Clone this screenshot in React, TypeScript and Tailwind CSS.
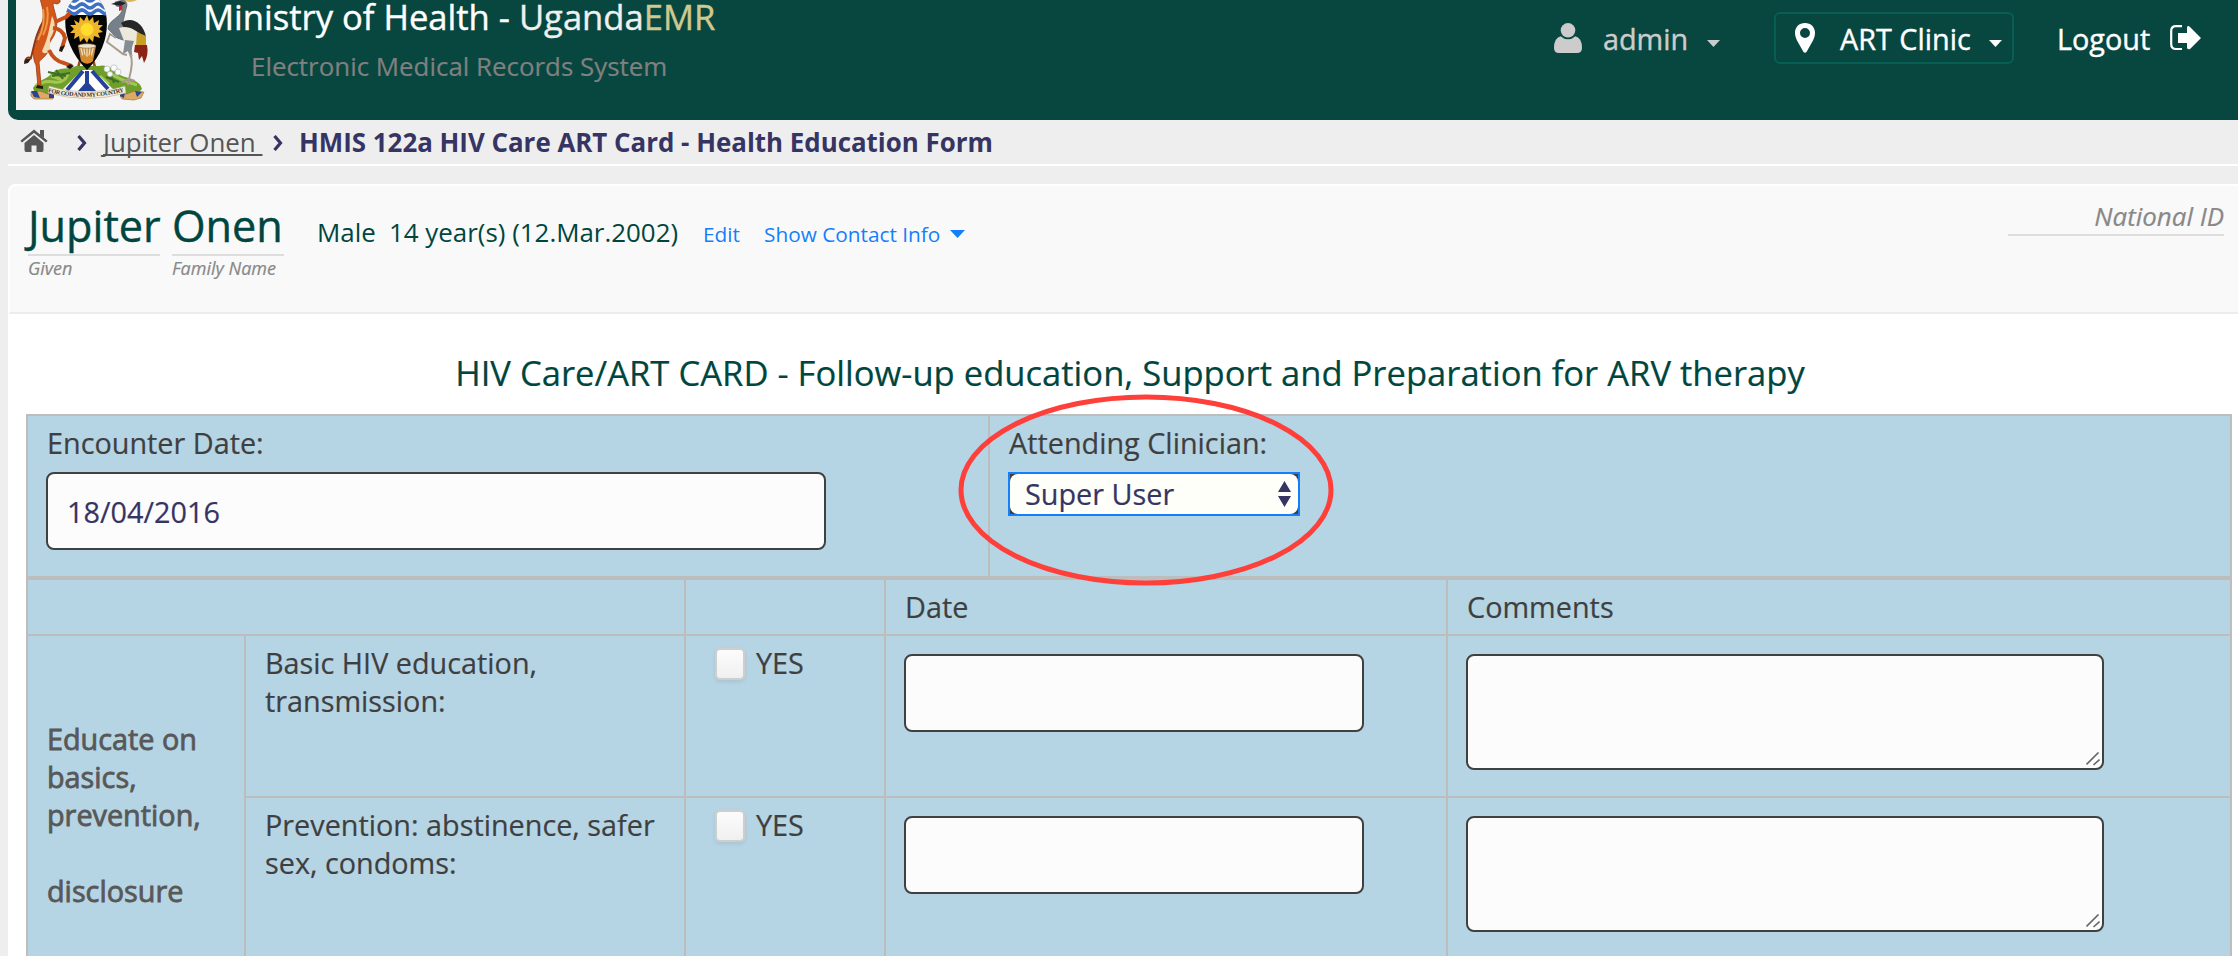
import React from "react";

function CoatOfArms() {
  return (
    <svg viewBox="0 0 144 110" className="block h-[110px] w-[144px] bg-[#f4f4f4]">
      <defs>
        <clipPath id="shield">
          <path d="M50 14C52 4 58 -4 70 -6C82 -4 88 4 90 14C93 30 89 52 71 70C53 52 47 30 50 14Z" />
        </clipPath>
        <path id="motto" d="M32 92Q71 102 111 91" />
      </defs>
      {/* spears */}
      <path d="M60 -2L82 78M82 -2L59 78" stroke="#9c4a1f" strokeWidth="2.6" />
      {/* mound */}
      <path d="M17 88C22 79 31 80 36 73C45 66 54 70 60 66H83C89 64 98 68 104 75C113 79 124 80 126 89L118 97L96 89L71 93L46 91L20 97Z" fill="#6f9f2b" />
      <path d="M20 86Q28 80 38 82T52 74M92 72Q104 80 121 85M35 76L47 80M84 76L93 84" stroke="#a3c750" strokeWidth="3" fill="none" />
      <path d="M32 72L50 76M36 76L54 73M40 70L47 79M90 77L103 82M94 73L98 83" stroke="#3f6f22" strokeWidth="2" fill="none" />
      {/* river */}
      <path d="M66 70H77L98 90Q71 97 46 90Z" fill="#fff" />
      <path d="M67 71L51 90M71 71L71 83M76 71L92 89" stroke="#25429a" strokeWidth="4" fill="none" />
      <path d="M71 81L62 91H80Z" fill="#25429a" />
      {/* shield */}
      <g clipPath="url(#shield)">
        <rect x="45" y="-8" width="52" height="82" fill="#050505" />
        <rect x="45" y="-8" width="52" height="23" fill="#fff" />
        <path d="M46 -1q4 -4 8 0t8 0t8 0t8 0t8 0t8 0M46 6q4 -4 8 0t8 0t8 0t8 0t8 0t8 0M46 12q4 -4 8 0t8 0t8 0t8 0t8 0t8 0" stroke="#3f70c4" strokeWidth="3.6" fill="none" />
      </g>
      <path d="M71 15L73 21L77 17L78 23L83 20L82 25L87 25L83 29L87 32L82 33L84 38L78 36L77 42L73 38L71 43L68 38L64 42L63 36L58 39L59 33L54 33L58 29L54 25L60 25L58 20L63 23L64 17L68 21Z" fill="#efb52d" />
      <circle cx="71" cy="29.5" r="6.5" fill="#ffdc2e" />
      <path d="M62 46L65 61Q71 66 77 61L80 46Z" fill="#c08c4c" />
      <path d="M65 48L67 57M68 48L69 57M71 48V57M74 48L73 57M77 48L75 57" stroke="#f1dbad" strokeWidth="1.4" />
      <path d="M65 57L68 54L71 57L75 54L77 61Q71 66 66 61Z" fill="#d98a2b" />
      <ellipse cx="71" cy="46" rx="9" ry="2.2" fill="#eee4cb" stroke="#93703c" strokeWidth=".6" />
      {/* kob antelope */}
      <path d="M29 18C20 33 19 42 15 58Q10 56 9 62" fill="none" stroke="#8f3412" strokeWidth="2" />
      <path d="M8 64Q8 58 15 59L12 63Z" fill="#262018" />
      <path d="M24 -2L42 -2C45 0 45 3 41 4L37 3C37 10 43 19 40 29C39 37 34 40 33 45C34 54 26 58 23 62L25 84L22 87L20 65C17 60 16 49 20 43C22 34 26 28 27 18C28 10 25 4 24 -2Z" fill="#d3571a" stroke="#8a3210" strokeWidth=".7" />
      <path d="M36 16C41 25 38 32 34 39L34 51C30 54 27 54 26 51C32 39 33 29 36 16Z" fill="#f3d8b0" />
      <path d="M27 9C29 19 27 30 22 40M31 7C33 16 31 28 27 35" stroke="#f19a44" strokeWidth="2" fill="none" />
      <path d="M39 22L50 17L54 13M37 28Q47 29 49 38L46 48M33 50Q38 61 48 63L56 66" fill="none" stroke="#c94f18" strokeWidth="4" strokeLinejoin="round" />
      <path d="M44 47L49 45L46 52L43 51ZM54 64L58 66L54 69L50 67ZM21 85L27 86L27 89L20 88Z" fill="#201b18" />
      {/* crested crane */}
      <path d="M108 -1Q114 2 120 -1" stroke="#d7b95a" strokeWidth="3" fill="none" />
      <path d="M99 2L107 0Q113 2 110 9L107 22L116 25L110 41L101 38L92 29C92 19 108 17 106 7L100 6Z" fill="#76808a" stroke="#4d565d" strokeWidth=".6" />
      <path d="M95 4L104 1L110 3L105 6Z" fill="#20252b" />
      <path d="M103 6Q108 5 106 10L103 11Z" fill="#d3202c" />
      <path d="M105 23C115 16 127 22 130 37L120 35L108 28Z" fill="#262626" />
      <path d="M103 28C112 25 120 30 126 36L119 47L108 41Z" fill="#ece8dc" />
      <path d="M121 32L130 36L130 46L120 46Z" fill="#c9a024" />
      <path d="M119 45L131 45Q133 55 128 63L126 56L123 60L122 53L118 52Z" fill="#8c2416" />
      <path d="M100 38L94 34L91 42L107 54L111 55M111 41Q111 48 114 54Q118 61 113 79M113 79L106 82M113 79L119 81M113 79L112 85" fill="none" stroke="#a99b8c" strokeWidth="2" />
      <path d="M118 41Q114 51 117 57L112 51L107 54L109 40Z" fill="#858d93" />
      <g fill="#fafafa" stroke="#b7bcbc" strokeWidth=".7">
        <circle cx="91" cy="69" r="3" />
        <circle cx="98" cy="68" r="3.2" />
        <circle cx="102" cy="72" r="3" />
        <circle cx="94" cy="74" r="2.6" />
      </g>
      {/* ribbon */}
      <path d="M15 92L24 91L37 96L37 99H18L15 96ZM104 96L119 91L128 92L125 98L118 100L106 99Z" fill="#dda965" stroke="#8d6a3d" strokeWidth=".6" />
      <path d="M15 91L21 91L24 98L18 97ZM104 92L109 92L108 98L104 96ZM33 93H38V98H33ZM119 91L126 92L121 97Z" fill="#2b448f" />
      <path d="M33 86Q71 98 109 86L110 93Q71 104 32 93Z" fill="#f6ecd6" stroke="#b0a080" strokeWidth=".5" />
      <text fontFamily="Liberation Serif, serif" fontWeight="700" fontSize="6.1" fill="#333">
        <textPath href="#motto" textLength="77">FOR GOD AND MY COUNTRY</textPath>
      </text>
    </svg>
  );
}

function Caret({ className }: { className: string }) {
  return (
    <svg viewBox="0 0 14 8" preserveAspectRatio="none" className={className}>
      <path d="M0 0H14L7 8Z" fill="currentColor" />
    </svg>
  );
}

function Chevron() {
  return (
    <svg viewBox="0 0 10 16" className="h-4 w-2.5 text-[#363463]">
      <path d="M1.5 1L7.5 8L1.5 15" fill="none" stroke="currentColor" strokeWidth="3.2" />
    </svg>
  );
}

function Header() {
  return (
    <header className="ml-2 flex h-[120px] rounded-bl-[10px] bg-[#07473f] pl-2">
      <CoatOfArms />
      <div className="ml-[43px] grow whitespace-nowrap">
        <div className="h-[34px] text-[34.6px] leading-[34px] text-white [-webkit-text-stroke:0.4px]">
          Ministry of Health - <span className="text-[#f0f0f0]">Uganda</span>
          <span className="text-[#d0c88f]">EMR</span>
        </div>
        <div className="ml-[48px] mt-[14px] text-[25.9px] leading-[36px] text-[#808080] [-webkit-text-stroke:0.2px]">
          Electronic Medical Records System
        </div>
      </div>
      <nav className="mt-3 flex h-[52px] items-center whitespace-nowrap text-[28.8px] text-white [-webkit-text-stroke:0.4px]">
        <div className="flex items-center text-[#cccccc]">
          <svg viewBox="0 0 28 30" className="h-[30px] w-7" fill="currentColor" strokeWidth="0">
            <circle cx="14" cy="7.3" r="7.3" />
            <path d="M6.5 13.2Q14 19.5 21.5 13.2Q28 15 28 25Q28 30 23 30H5Q0 30 0 25Q0 15 6.5 13.2Z" />
          </svg>
          <span className="ml-[21px] w-[84px] pt-[2px]">admin</span>
          <Caret className="ml-[20px] mt-[10px] h-[7px] w-[13px]" />
        </div>
        <div className="ml-[54px] flex h-[52px] w-[240px] items-center rounded-md border-2 border-[#075e53] pl-[19px]">
          <svg viewBox="0 0 20 30" className="h-[30px] w-5" fill="currentColor">
            <path fillRule="evenodd" d="M10 0C16 0 20 4 20 10C20 13 19 15 18 17.500L11.500 29Q10 30.500 8.500 29L2 17.500C1 15 0 13 0 10C0 4 4 0 10 0ZM10 5A5 5 0 1 0 10 15A5 5 0 1 0 10 5Z" />
          </svg>
          <span className="ml-[25px] w-[132px] pt-[2px]">ART Clinic</span>
          <Caret className="ml-[17px] mt-[10px] h-[7px] w-[13px]" />
        </div>
        <div className="ml-[43px] mr-[37px] flex items-center">
          <span className="w-[93px] pt-[2px]">Logout</span>
          <svg viewBox="0 0 31 26" className="ml-[20px] h-[26px] w-[31px]">
            <path d="M12 1.2H6Q1.2 1.2 1.2 6V19Q1.2 24 6 24H12" fill="none" stroke="currentColor" strokeWidth="2.2" />
            <path d="M8 8H17V2Q18 0 20 2L31 13L20 24Q18 25 17 23V18H8Z" fill="currentColor" />
          </svg>
        </div>
      </nav>
    </header>
  );
}

function Breadcrumbs() {
  return (
    <div className="ml-2 flex h-[46px] items-center whitespace-nowrap border-b-2 border-white pl-3 text-[25.9px]">
      <svg viewBox="0 0 28 24" className="-mt-0.5 h-6 w-7" fill="#555">
        <path d="M14 6L23.500 14V21Q23.500 23 22 23H16.500V16.500H11.500V23H6Q4.500 23 4.500 21V14Z" />
        <path d="M1.200 12.600L14 2.200L26.800 12.600" fill="none" stroke="#555" strokeWidth="2.500" />
        <path d="M20 1H24V9L20 6Z" />
      </svg>
      <span className="ml-[29px] mt-[2px] flex">
        <Chevron />
      </span>
      <span className="ml-[16px] w-[161px] whitespace-pre text-[#555] underline decoration-2 underline-offset-[2px] [text-decoration-skip-ink:none]">Jupiter Onen </span>
      <span className="ml-[9px] mt-[2px] flex">
        <Chevron />
      </span>
      <span className="ml-[16px] font-bold text-[#363463]">HMIS 122a HIV Care ART Card - Health Education Form</span>
    </div>
  );
}

function PatientHeader() {
  return (
    <div className="flex h-[130px] justify-between whitespace-nowrap rounded-tl-lg border-b-2 border-l-2 border-t-2 border-b-[#ececec] border-l-white border-t-white bg-[#f9f9f9]">
      <div className="flex items-start pl-[18px] pt-[9px] text-[#00463f]">
        <div className="w-[132px]">
          <div className="h-[61px] border-b-2 border-[#ddd] text-[43.2px] leading-[61px] [-webkit-text-stroke:0.4px]">Jupiter</div>
          <div className="text-[18px] italic leading-6 text-[#888] [-webkit-text-stroke:0.2px]">Given</div>
        </div>
        <div className="ml-3 w-[112px]">
          <div className="h-[61px] border-b-2 border-[#ddd] text-[43.2px] leading-[61px] [-webkit-text-stroke:0.4px]">Onen</div>
          <div className="text-[18px] italic leading-6 text-[#888] [-webkit-text-stroke:0.2px]">Family Name</div>
        </div>
        <div className="ml-[33px] flex h-[61px] items-baseline text-[25.9px] leading-[74px]">
          <span className="w-[72px]">Male</span>
          <span className="w-[314px]">14 year(s) (12.Mar.2002)</span>
          <span className="w-[61px] text-[20.8px] text-[#157efb]">Edit</span>
          <span className="text-[20.8px] text-[#157efb]">Show Contact Info</span>
          <Caret className="ml-[10px] h-[8px] w-[15px] -translate-y-[4px] text-[#157efb]" />
        </div>
      </div>
      <div className="mr-[14px] mt-[12px] h-[38px] w-[216px] border-b-2 border-[#ddd] text-right text-[25.9px] italic leading-[36px] text-[#888] [-webkit-text-stroke:0.2px]">
        National ID
      </div>
    </div>
  );
}

function TextBox({ className, value }: { className: string; value?: string }) {
  return (
    <input
      defaultValue={value}
      className={`block rounded-lg border-2 border-[#404040] bg-[#fcfcfc] px-[19px] text-[28.8px] text-[#363463] outline-none ${className}`}
    />
  );
}

function CommentBox() {
  return (
    <div className="flex h-[116px] w-[638px] items-end justify-end rounded-lg border-2 border-[#404040] bg-[#fcfcfc] p-[2px]">
      <svg viewBox="0 0 14 14" className="h-3.5 w-3.5">
        <path d="M.5 12.5L12.5 .5M7.5 13L13.5 7.5" stroke="#666" strokeWidth="1.6" fill="none" />
      </svg>
    </div>
  );
}

function EducationRow({ label }: { label: string }) {
  return (
    <div className="flex h-[162px] border-b-2 border-[#bdbdbd]">
      <div className="w-[440px] border-r-2 border-[#bdbdbd] py-2 pl-[19px] pr-4 leading-[38px]">{label}</div>
      <div className="flex w-[200px] items-start border-r-2 border-[#bdbdbd] pl-[29px] pt-2">
        <span className="mt-1 h-8 w-[30px] rounded-[5px] border-2 border-[#cecece] bg-linear-to-b from-[#fcfcfc] to-[#f0f0f0] shadow-[0_2px_4px_rgba(0,0,0,0.08)]" />
        <span className="ml-[11px]">YES</span>
      </div>
      <div className="w-[562px] border-r-2 border-[#bdbdbd] pl-[18px] pt-[18px]">
        <TextBox className="h-[78px] w-[460px]" />
      </div>
      <div className="pl-[18px] pt-[18px]">
        <CommentBox />
      </div>
    </div>
  );
}

function EncounterForm() {
  return (
    <div className="ml-[18px] w-[2206px] border-2 border-[#bdbdbd] bg-[#b5d4e4] text-[28.8px] leading-[38px] text-[#3f3f3f] [-webkit-text-stroke:0.2px]">
      <div className="flex h-[164px] border-b-4 border-[#bdbdbd]">
        <div className="w-[962px] border-r-2 border-[#bdbdbd] pl-[18px] pt-2">
          <div className="pl-px">Encounter Date:</div>
          <TextBox className="mt-[10px] h-[78px] w-[780px]" value="18/04/2016" />
        </div>
        <div className="relative pl-[18px] pt-2">
          <div className="pl-px">Attending Clinician:</div>
          <div className="mt-[10px] h-11 w-[292px] border-2 border-[#157efb] bg-[#404040]">
            <div className="flex h-full items-center justify-between rounded-lg bg-[#fffffa] pl-[15px] pr-[7px] text-[#363463]">
              <span>Super User</span>
              <svg viewBox="0 0 13 26" className="h-[26px] w-[13px]" fill="currentColor" strokeWidth="0">
                <path d="M6.5 0L13 11H0ZM0 15H13L6.5 26Z" />
              </svg>
            </div>
          </div>
          <svg viewBox="0 0 376 192" className="pointer-events-none absolute -left-[32px] -top-[22px] h-[192px] w-[376px]">
            <ellipse cx="188" cy="96" rx="185" ry="93" fill="none" stroke="#ff3f3a" strokeWidth="5" />
          </svg>
        </div>
      </div>
      <div className="flex h-14 border-b-2 border-[#bdbdbd]">
        <div className="w-[658px] border-r-2 border-[#bdbdbd]" />
        <div className="w-[200px] border-r-2 border-[#bdbdbd]" />
        <div className="w-[562px] border-r-2 border-[#bdbdbd] pl-[19px] pt-2">Date</div>
        <div className="pl-[19px] pt-2">Comments</div>
      </div>
      <div className="flex">
        <div className="w-[218px] border-r-2 border-[#bdbdbd] pl-[19px] pt-[84px] text-[#585858] [-webkit-text-stroke:0.8px]">
          Educate on
          <br />
          basics,
          <br />
          prevention,
          <br />
          <br />
          disclosure
        </div>
        <div className="grow">
          <EducationRow label="Basic HIV education, transmission:" />
          <EducationRow label="Prevention: abstinence, safer sex, condoms:" />
        </div>
      </div>
    </div>
  );
}

export default function App() {
  return (
    <div className="h-[956px] w-[2238px] overflow-hidden bg-[#eeeeee] font-['Open_Sans','Noto_Sans',sans-serif]">
      <Header />
      <Breadcrumbs />
      <main className="ml-2 mt-[18px] h-[800px] rounded-tl-lg bg-white">
        <PatientHeader />
        <h2 className="flex h-[100px] items-center justify-center pl-[14px] pt-[18px] text-[34.6px] text-[#00463f] [-webkit-text-stroke:0.2px]">
          HIV Care/ART CARD - Follow-up education, Support and Preparation for ARV therapy
        </h2>
        <EncounterForm />
      </main>
    </div>
  );
}
